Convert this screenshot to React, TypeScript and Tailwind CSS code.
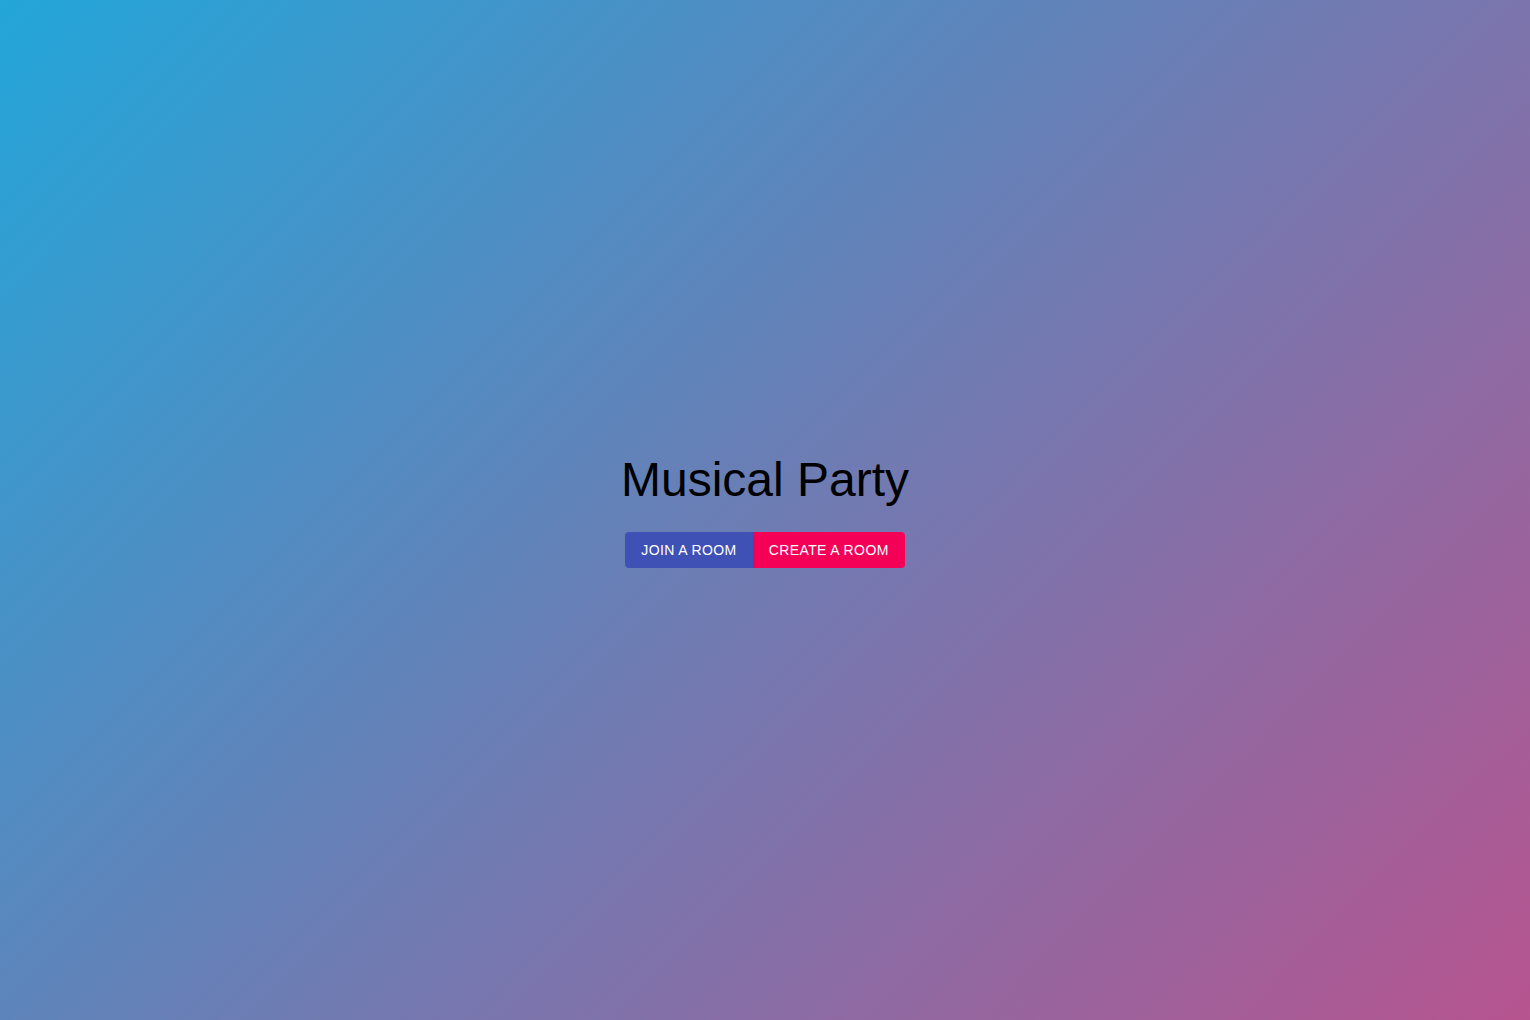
export default function App() {
  return (
    <div className="w-full h-screen bg-[linear-gradient(135deg,#23a6d9,#b6548f)] flex flex-col items-center justify-center pb-1" style={{ fontFamily: '"Liberation Sans", Arial, sans-serif' }}>
      <h3 className="pt-[4px] text-[48px] leading-[56px] text-black font-normal" style={{ fontFamily: '"Liberation Sans", Arial, sans-serif' }}>Musical Party</h3>
      <div className="mt-[24px] flex rounded-[4px]">
        <button className="h-[36px] px-4 bg-[#3f51b5] text-white text-[14px] uppercase tracking-[0.02857em] rounded-l-[4px]">Join a Room</button>
        <button className="h-[36px] px-4 bg-[#f50057] text-white text-[14px] uppercase tracking-[0.02857em] rounded-r-[4px]">Create a Room</button>
      </div>
    </div>
  );
}
